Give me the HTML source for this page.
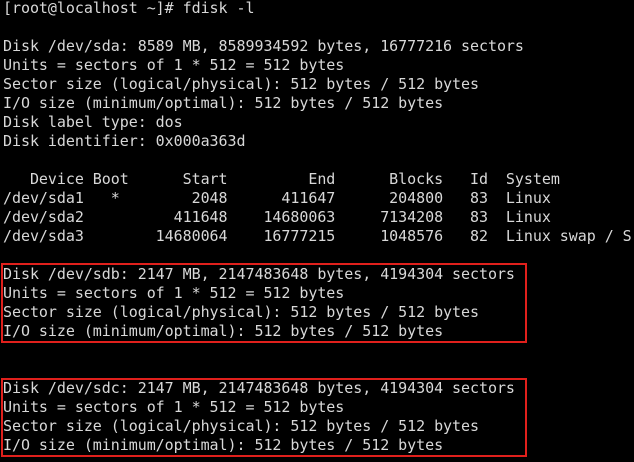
<!DOCTYPE html>
<html><head><style>
html,body{margin:0;padding:0;background:#000;width:634px;height:462px;overflow:hidden}
pre{position:absolute;left:3px;top:-1px;margin:0;font-family:"DejaVu Sans Mono","Liberation Mono",monospace;font-size:15px;line-height:19px;color:#d8d8d8;white-space:pre;letter-spacing:-0.05px}
.box{position:absolute;border:2px solid #e0201c;box-sizing:border-box}
</style></head><body>
<pre>[root@localhost ~]# fdisk -l

Disk /dev/sda: 8589 MB, 8589934592 bytes, 16777216 sectors
Units = sectors of 1 * 512 = 512 bytes
Sector size (logical/physical): 512 bytes / 512 bytes
I/O size (minimum/optimal): 512 bytes / 512 bytes
Disk label type: dos
Disk identifier: 0x000a363d

   Device Boot      Start         End      Blocks   Id  System
/dev/sda1   *        2048      411647      204800   83  Linux
/dev/sda2          411648    14680063     7134208   83  Linux
/dev/sda3        14680064    16777215     1048576   82  Linux swap / S

Disk /dev/sdb: 2147 MB, 2147483648 bytes, 4194304 sectors
Units = sectors of 1 * 512 = 512 bytes
Sector size (logical/physical): 512 bytes / 512 bytes
I/O size (minimum/optimal): 512 bytes / 512 bytes


Disk /dev/sdc: 2147 MB, 2147483648 bytes, 4194304 sectors
Units = sectors of 1 * 512 = 512 bytes
Sector size (logical/physical): 512 bytes / 512 bytes
I/O size (minimum/optimal): 512 bytes / 512 bytes
</pre>
<div class="box" style="left:1px;top:263px;width:526px;height:80px"></div>
<div class="box" style="left:1px;top:378px;width:526px;height:79px"></div>
</body></html>
